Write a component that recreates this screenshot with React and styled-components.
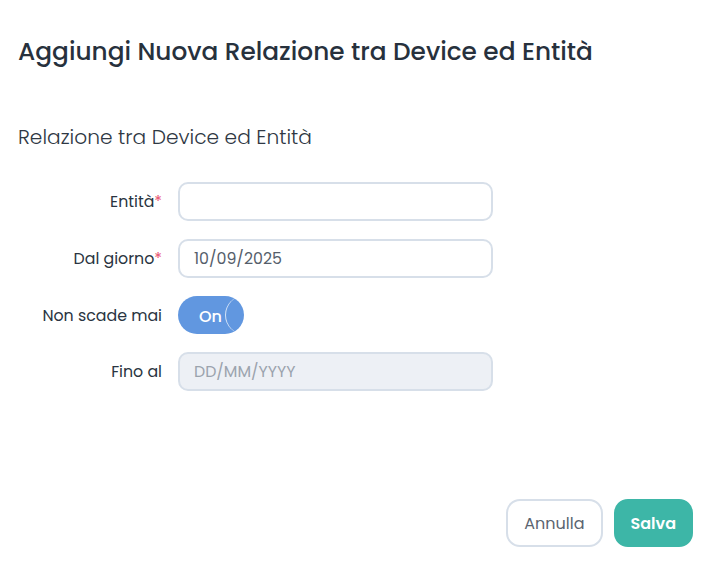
import styled, { createGlobalStyle } from "styled-components";

const GlobalStyle = createGlobalStyle`
  body {
    margin: 0;
    background: #ffffff;
    font-family: "Poppins", "Inter", "Noto Sans", sans-serif;
    color: #2a3441;
  }
`;

const Modal = styled.div`
  box-sizing: border-box;
  width: 715px;
  height: 577px;
  display: flex;
  flex-direction: column;
  padding: 34px 22px 30px 18px;
`;

const Title = styled.h2`
  margin: 0;
  font-size: 24.8px;
  font-weight: 500;
  line-height: 36px;
  color: #27313d;
`;

const Section = styled.h3`
  margin: 53px 0 0;
  font-size: 20.2px;
  font-weight: 300;
  line-height: 28px;
  color: #2f3844;
`;

const Form = styled.div`
  margin-top: 31px;
  display: grid;
  grid-template-columns: 144px 315px;
  column-gap: 16px;
  row-gap: 18px;
  align-items: center;
`;

const Label = styled.label`
  text-align: right;
  font-size: 15.8px;
  font-weight: 400;
  color: #2a3441;
`;

const Star = styled.span`
  color: #e8506e;
`;

const Input = styled.div`
  box-sizing: border-box;
  height: 39px;
  display: flex;
  align-items: center;
  padding: 0 14px;
  border: 2px solid #d7dfe9;
  border-radius: 10px;
  background: ${(p) => (p.disabled ? "#edf0f5" : "#ffffff")};
  font-size: 15.8px;
  color: ${(p) => (p.placeholder ? "#9ba3ad" : "#555e6b")};
`;

const Toggle = styled.div`
  position: relative;
  box-sizing: border-box;
  width: 66px;
  height: 38px;
  border-radius: 19px;
  background: #6197e0;
  display: flex;
  align-items: center;
  padding-left: 21px;
  padding-top: 2px;
  font-size: 16px;
  font-weight: 500;
  color: #ffffff;
  overflow: hidden;
`;

const Knob = styled.span`
  position: absolute;
  top: 0;
  right: 0;
  width: 19px;
  height: 38px;
  border-radius: 19px 0 0 19px;
  border-left: 1px solid rgba(255, 255, 255, 0.75);
  box-sizing: border-box;
`;

const Footer = styled.div`
  margin-top: auto;
  display: flex;
  justify-content: flex-end;
  gap: 11px;
`;

const Button = styled.button`
  box-sizing: border-box;
  height: 48px;
  padding: 0 ${(p) => (p.primary ? "15px" : "16px")};
  border-radius: 14px;
  font-family: inherit;
  font-size: 16px;
  font-weight: ${(p) => (p.primary ? 600 : 400)};
  border: 2px solid ${(p) => (p.primary ? "#3db6a7" : "#d7dfe9")};
  background: ${(p) => (p.primary ? "#3db6a7" : "#ffffff")};
  color: ${(p) => (p.primary ? "#ffffff" : "#5b6470")};
`;

export default function App() {
  return (
    <>
      <GlobalStyle />
      <Modal>
        <Title>Aggiungi Nuova Relazione tra Device ed Entità</Title>
        <Section>Relazione tra Device ed Entità</Section>
        <Form>
          <Label>
            Entità<Star>*</Star>
          </Label>
          <Input />
          <Label>
            Dal giorno<Star>*</Star>
          </Label>
          <Input>10/09/2025</Input>
          <Label>Non scade mai</Label>
          <Toggle>
            On
            <Knob />
          </Toggle>
          <Label>Fino al</Label>
          <Input disabled placeholder>
            DD/MM/YYYY
          </Input>
        </Form>
        <Footer>
          <Button>Annulla</Button>
          <Button primary>Salva</Button>
        </Footer>
      </Modal>
    </>
  );
}
